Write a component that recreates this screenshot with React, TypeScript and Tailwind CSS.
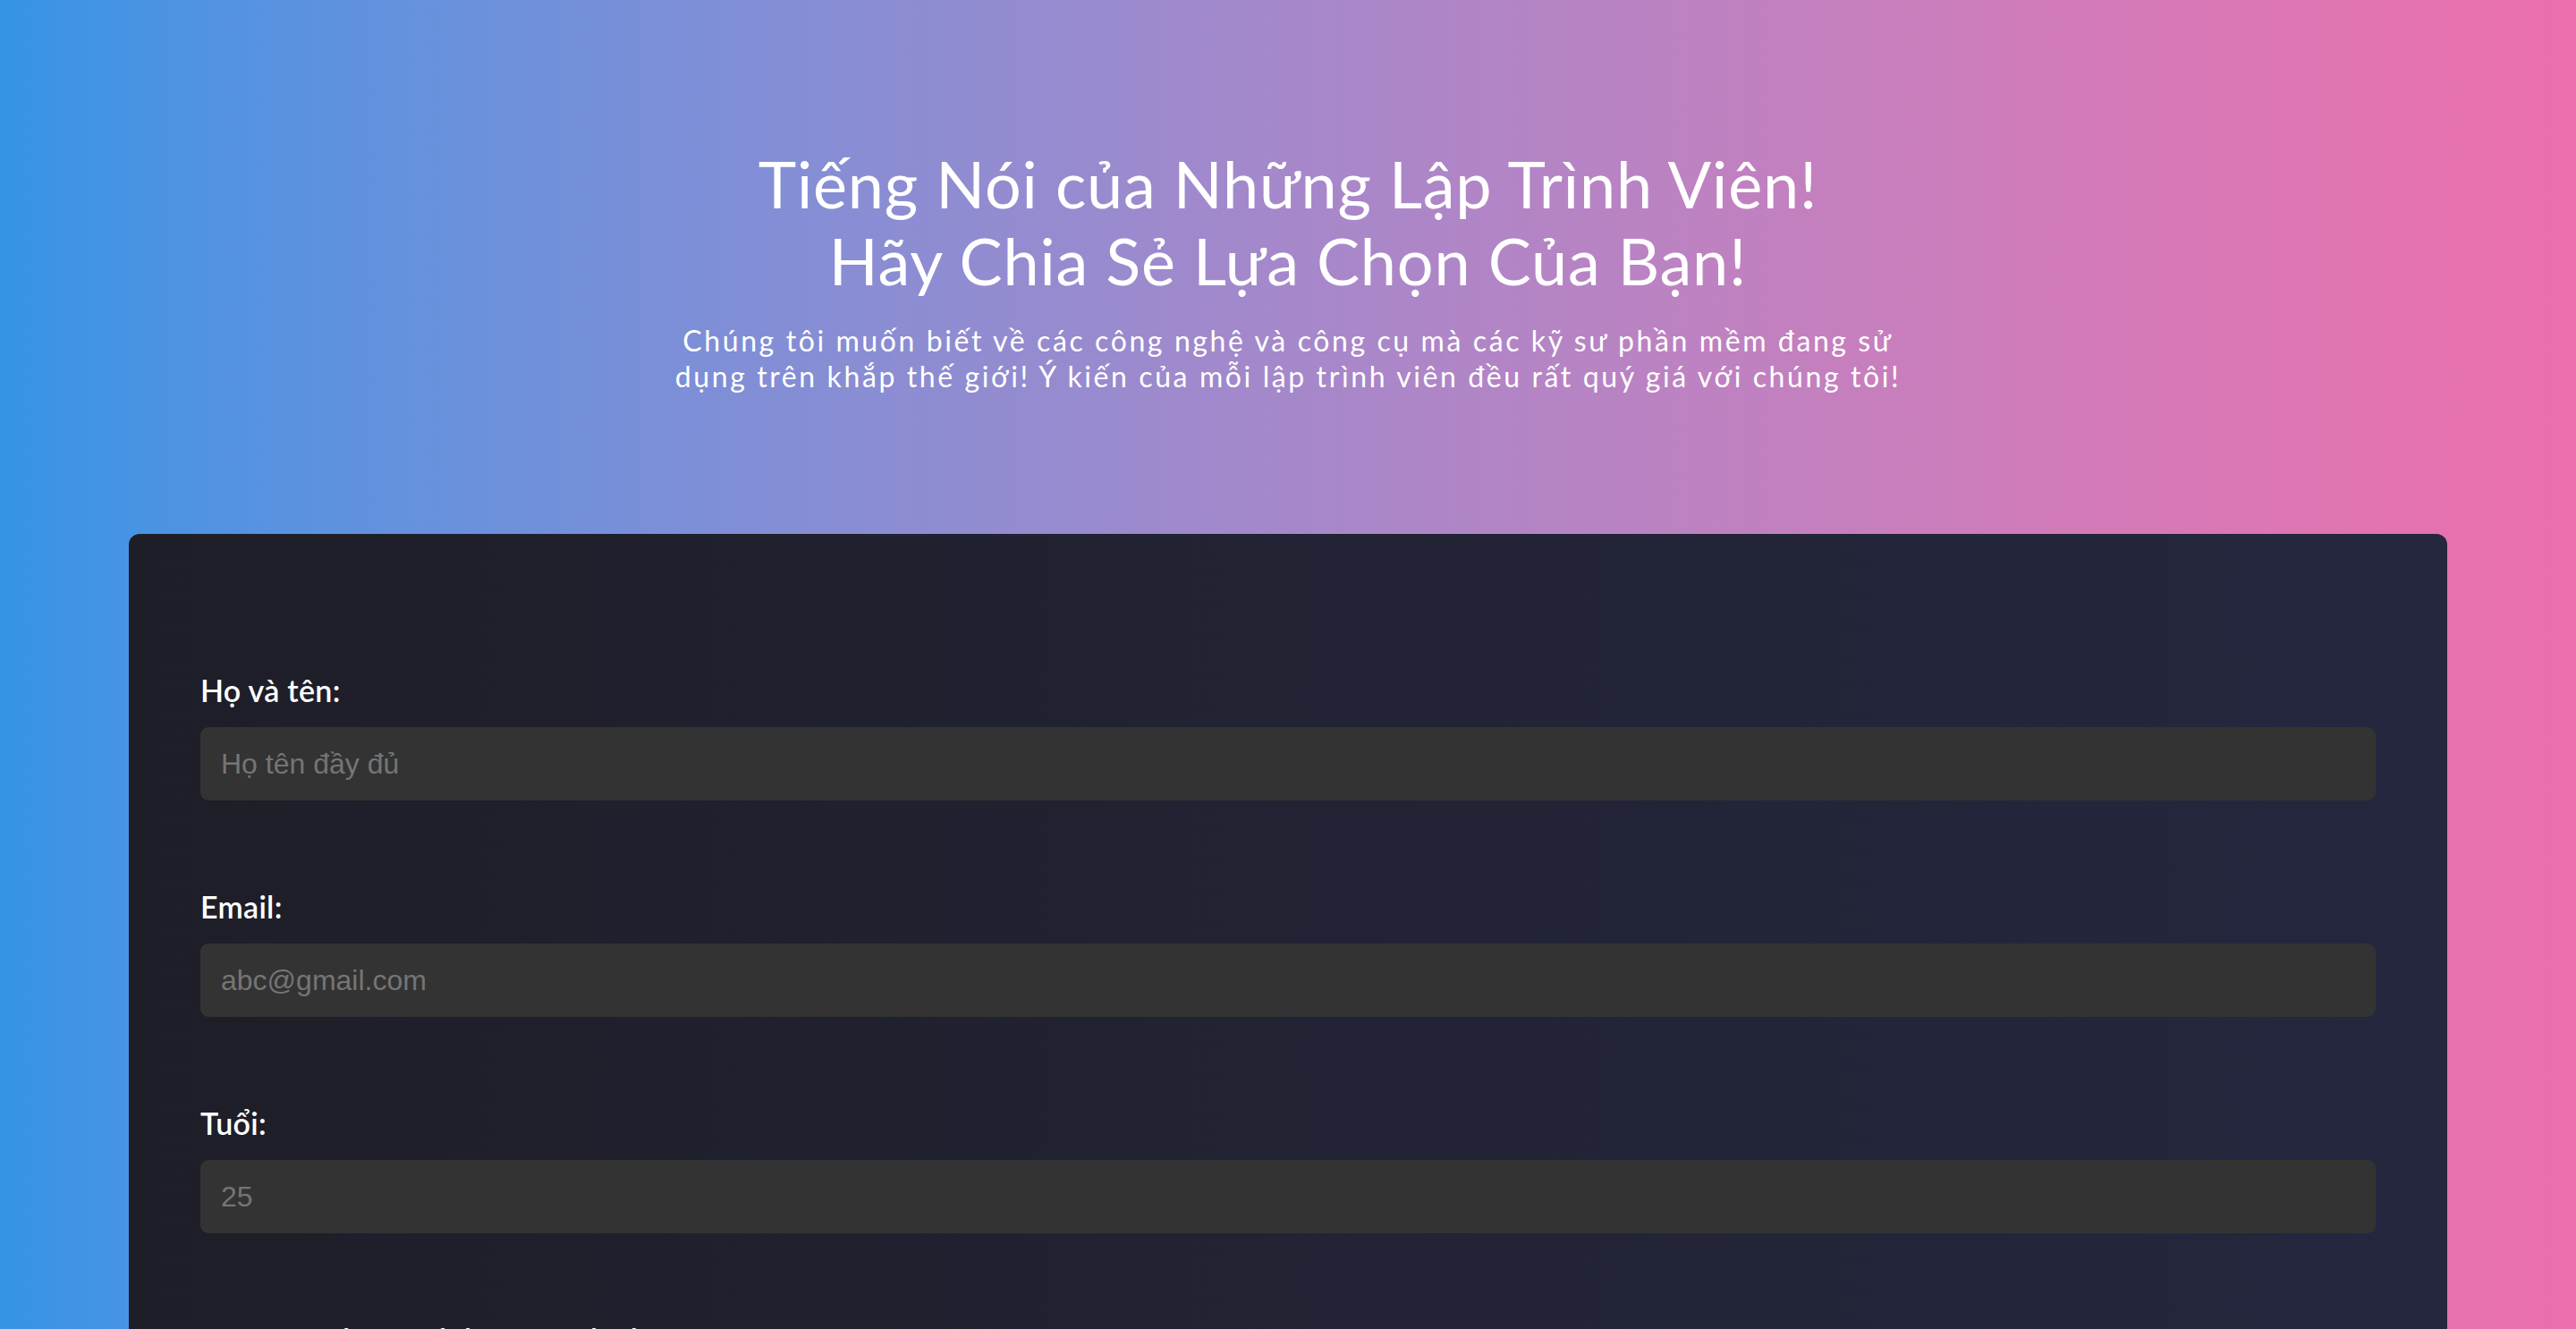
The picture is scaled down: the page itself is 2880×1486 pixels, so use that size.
export default function App() {
  const fields = [
    { id: "name", label: "Họ và tên:", type: "text", placeholder: "Họ tên đầy đủ" },
    { id: "email", label: "Email:", type: "email", placeholder: "abc@gmail.com" },
    { id: "age", label: "Tuổi:", type: "number", placeholder: "25" },
  ];

  return (
    <div className="min-h-screen bg-linear-to-r from-[#3494e6] to-[#ec6ead] pt-[162px] pb-[120px] font-['Lato','Open_Sans',sans-serif] text-white">
      <header className="flex flex-col items-center text-center">
        <h1 className="text-[72px] leading-[86px] font-normal tracking-[0.8px]">
          Tiếng Nói của Những Lập Trình Viên!
          <br />
          Hãy Chia Sẻ Lựa Chọn Của Bạn!
        </h1>
        <p className="mt-[27px] max-w-[1400px] text-[32px] leading-[40px] font-normal tracking-[2.6px]">
          Chúng tôi muốn biết về các công nghệ và công cụ mà các kỹ sư phần mềm đang sử dụng trên khắp thế giới! Ý kiến
          của mỗi lập trình viên đều rất quý giá với chúng tôi!
        </p>
      </header>

      <form className="mx-auto mt-[156px] w-[90%] rounded-xl bg-linear-to-r from-[#1e1e28] to-[#25273f] px-[80px] pt-[155px] pb-[80px]">
        {fields.map((f) => (
          <div key={f.id} className="mb-[99px]">
            <label htmlFor={f.id} className="block text-[34px] leading-[40px] font-semibold tracking-[0.3px]">
              {f.label}
            </label>
            <input
              id={f.id}
              type={f.type}
              placeholder={f.placeholder}
              className="mt-[21px] block h-[82px] w-full rounded-[9px] bg-[#333333] px-[23px] font-['Liberation_Sans',Arial,sans-serif] text-[32px] text-white placeholder:text-[#757575] outline-none [appearance:textfield]"
            />
          </div>
        ))}
        <div className="mb-[99px]">
          <label className="block text-[34px] leading-[40px] font-semibold tracking-[0.3px]">
            Ngôn ngữ lập trình bạn yêu thích:
          </label>
          <select className="mt-[21px] block h-[82px] w-full rounded-[9px] bg-[#333333] px-[23px] font-['Liberation_Sans',Arial,sans-serif] text-[32px] text-[#bbbbbb] outline-none">
            <option>Chọn ngôn ngữ</option>
          </select>
        </div>
      </form>
    </div>
  );
}
